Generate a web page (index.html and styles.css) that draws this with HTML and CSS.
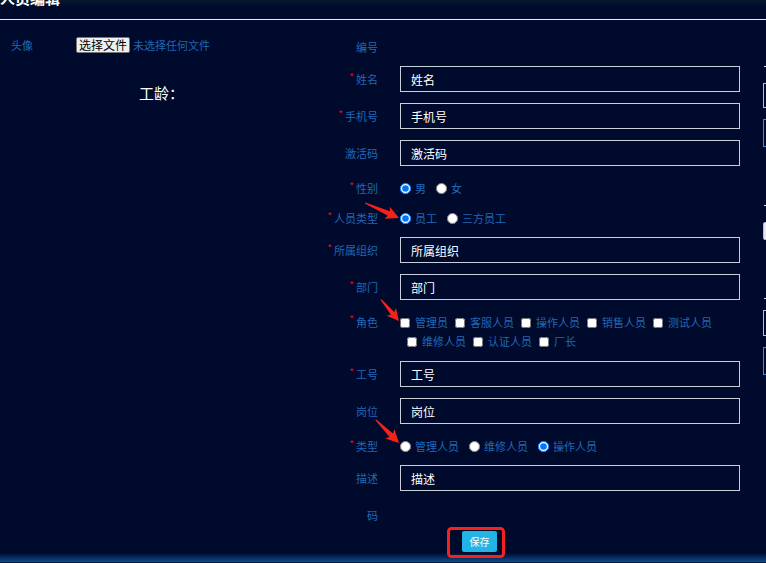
FILE: index.html
```
<!DOCTYPE html>
<html>
    <head>
        <meta charset="utf-8">
        <link rel="stylesheet" href="styles.css">
    </head>
    <body>
        <!-- edge of the list page behind the dialog -->
        <div class="page-edge">
            <span class="edge-line" style="top:66px"></span>
            <span class="edge-box" style="top:83px;height:25px"></span>
            <span class="edge-box edge-blue" style="top:119px;height:28px"></span>
            <span class="edge-line" style="top:205px"></span>
            <span class="edge-box edge-fill" style="top:222px;height:18px"></span>
            <span class="edge-line" style="top:298px"></span>
            <span class="edge-box" style="top:310px;height:26px"></span>
            <span class="edge-box edge-blue" style="top:347px;height:28px"></span>
        </div>

        <div class="modal">
            <div class="modal-head">
                <span class="modal-title">人员编辑</span>
            </div>

            <div class="modal-body">
                <div class="side">
                    <div class="avatar-row">
                        <span class="side-label">头像</span>
                        <span class="file-btn">选择文件</span>
                        <span class="file-name">未选择任何文件</span>
                    </div>
                    <div class="seniority">工龄：</div>
                </div>

                <form class="form">
                    <div class="row row-first">
                        <label class="lbl">编号</label>
                    </div>
                    <div class="row">
                        <label class="lbl req">姓名</label>
                        <input class="txt" type="text" value="姓名">
                    </div>
                    <div class="row">
                        <label class="lbl req">手机号</label>
                        <input class="txt" type="text" value="手机号">
                    </div>
                    <div class="row">
                        <label class="lbl">激活码</label>
                        <input class="txt" type="text" value="激活码">
                    </div>
                    <div class="row row-choice">
                        <label class="lbl req">性别</label>
                        <label class="opt"><input type="radio" name="sex" checked>男</label>
                        <label class="opt"><input type="radio" name="sex">女</label>
                    </div>
                    <div class="row row-choice">
                        <label class="lbl req">人员类型</label>
                        <label class="opt"><input type="radio" name="kind" checked>员工</label>
                        <label class="opt"><input type="radio" name="kind">三方员工</label>
                    </div>
                    <div class="row">
                        <label class="lbl req">所属组织</label>
                        <input class="txt" type="text" value="所属组织">
                    </div>
                    <div class="row">
                        <label class="lbl req">部门</label>
                        <input class="txt" type="text" value="部门">
                    </div>
                    <div class="row row-roles">
                        <label class="lbl req">角色</label>
                        <div class="roles">
                            <div class="roles-line">
                                <label class="opt opt-cb"><input type="checkbox">管理员</label>
                                <label class="opt opt-cb"><input type="checkbox">客服人员</label>
                                <label class="opt opt-cb"><input type="checkbox">操作人员</label>
                                <label class="opt opt-cb"><input type="checkbox">销售人员</label>
                                <label class="opt opt-cb"><input type="checkbox">测试人员</label>
                            </div>
                            <div class="roles-line roles-wrap">
                                <label class="opt opt-cb"><input type="checkbox">维修人员</label>
                                <label class="opt opt-cb"><input type="checkbox">认证人员</label>
                                <label class="opt opt-cb"><input type="checkbox">厂长</label>
                            </div>
                        </div>
                    </div>
                    <div class="row">
                        <label class="lbl req">工号</label>
                        <input class="txt" type="text" value="工号">
                    </div>
                    <div class="row">
                        <label class="lbl">岗位</label>
                        <input class="txt" type="text" value="岗位">
                    </div>
                    <div class="row row-choice">
                        <label class="lbl req">类型</label>
                        <label class="opt"><input type="radio" name="type">管理人员</label>
                        <label class="opt"><input type="radio" name="type">维修人员</label>
                        <label class="opt"><input type="radio" name="type" checked>操作人员</label>
                    </div>
                    <div class="row">
                        <label class="lbl">描述</label>
                        <input class="txt" type="text" value="描述">
                    </div>
                    <div class="row row-last">
                        <label class="lbl">码</label>
                    </div>
                    <div class="actions">
                        <button type="button" class="save-btn">保存</button>
                    </div>
                </form>
            </div>

            <div class="modal-foot"></div>
        </div>

        <!-- red markers over the form -->
        <svg class="marks" width="766" height="563" viewBox="0 0 766 563">
            <g fill="#f5221b">
                <g transform="translate(399 218) rotate(24)">
                    <polygon points="-37,-0.6 -11,-2.4 -13,-6.5 0,0 -13,6.5 -11,2.4 -37,0.6"/>
                </g>
                <g transform="translate(399 321) rotate(50)">
                    <polygon points="-28,-0.6 -10,-2.2 -12,-6 0,0 -12,6 -10,2.2 -28,0.6"/>
                </g>
                <g transform="translate(399 443) rotate(45)">
                    <polygon points="-33,-0.6 -11,-2.4 -13,-6.5 0,0 -13,6.5 -11,2.4 -33,0.6"/>
                </g>
            </g>
            <rect x="448.5" y="528.5" width="55" height="28" rx="3" fill="none" stroke="#f5221b" stroke-width="3"/>
        </svg>
    </body>
</html>
```

FILE: styles.css
```
body {
    margin: 0;
    height: 100vh;
    overflow: hidden;
    background-color: #000a2d;
    font-family: "Noto Sans CJK SC", "Microsoft YaHei", sans-serif;
    position: relative;
}

.modal {
    display: flex;
    flex-direction: column;
    height: 100%;
}

.modal-head {
    flex-shrink: 0;
    height: 19px;
    overflow: hidden;
    border-bottom: 1px solid #e8ecf2;
    background: linear-gradient(#041a2c, #000a2d 6px);
}
.modal-title {
    display: block;
    margin-top: -10px;
    font-size: 15px;
    line-height: 16px;
    font-weight: bold;
    color: #fff;
}

.modal-body {
    flex: 1;
    min-height: 0;
    display: flex;
}

.modal-foot {
    flex-shrink: 0;
    height: 9px;
    background: linear-gradient(#000a2d, #0a4d90);
    border-bottom: 1px solid #021a3a;
}

/* left column: avatar and seniority */
.side {
    width: 300px;
    padding-top: 17px;
}
.avatar-row {
    display: flex;
    align-items: center;
    height: 16px;
    padding-left: 11px;
}
.side-label {
    width: 65px;
    font-size: 11px;
    color: #2168b4;
}
.file-btn {
    box-sizing: border-box;
    height: 16px;
    padding: 0 2px;
    background-color: #efefef;
    border: 1px solid #767676;
    border-radius: 2px;
    font-size: 12px;
    line-height: 14px;
    color: #000;
}
.file-name {
    margin-left: 3px;
    font-size: 11px;
    color: #2168b4;
}
.seniority {
    margin-top: 30px;
    padding-left: 139px;
    font-size: 15px;
    line-height: 20px;
    color: #fff;
}

/* form column */
.form {
    width: 440px;
    margin: 0;
    padding-top: 14px;
}
.row {
    display: flex;
    align-items: center;
    height: 26px;
    margin-bottom: 11px;
}
.row-first {
    margin-bottom: 6px;
}
.row-choice {
    height: 22px;
    margin-bottom: 8px;
}
.row-roles {
    height: auto;
    align-items: flex-start;
    padding-top: 2px;
    margin-bottom: 10px;
}
.row-roles .lbl {
    line-height: 19px;
}
.row-last {
    margin-bottom: 3px;
}

.lbl {
    box-sizing: border-box;
    width: 78px;
    margin-right: 22px;
    flex-shrink: 0;
    text-align: right;
    font-size: 11px;
    color: #2168b4;
}
.req::before {
    content: "*";
    margin-right: 2px;
    font-size: 10px;
    vertical-align: top;
    line-height: 12px;
    color: #f00;
}

.txt {
    box-sizing: border-box;
    width: 340px;
    height: 26px;
    margin: 0;
    padding: 0 10px;
    border: 1px solid #c9cfd8;
    background: transparent;
    color: #fff;
    font-family: inherit;
    font-size: 12px;
    outline: none;
}

.opt {
    display: inline-flex;
    align-items: center;
    margin-right: 10px;
    font-size: 11px;
    line-height: 19px;
    color: #2168b4;
}
.opt input {
    width: 11px;
    height: 11px;
    margin: 0 4px 0 0;
}
.opt-cb {
    margin-right: 7px;
}
.opt-cb input {
    width: 10px;
    height: 10px;
    margin-right: 5px;
    border-radius: 0;
}

.roles-line {
    display: flex;
    height: 19px;
}
.roles-wrap {
    padding-left: 7px;
}

.actions {
    display: flex;
    padding-left: 162px;
}
.save-btn {
    width: 35px;
    height: 21px;
    padding: 0;
    border: none;
    border-radius: 2px;
    background-color: #22b4e4;
    color: #fff;
    font-family: inherit;
    font-size: 10px;
    cursor: pointer;
}

/* strip of the page underneath, on the right */
.page-edge {
    position: absolute;
    top: 0;
    right: 0;
    width: 3px;
    height: 100%;
}
.edge-line {
    position: absolute;
    left: 1px;
    right: 0;
    height: 1px;
    background-color: #d8dde4;
}
.edge-box {
    position: absolute;
    left: 0;
    right: -4px;
    box-sizing: border-box;
    border: 1px solid #b8c0cc;
}
.edge-blue {
    border-color: #3b8bd6;
}
.edge-fill {
    background-color: #e6e8ec;
    border-radius: 2px;
}

.marks {
    position: absolute;
    top: 0;
    left: 0;
    pointer-events: none;
}
```
